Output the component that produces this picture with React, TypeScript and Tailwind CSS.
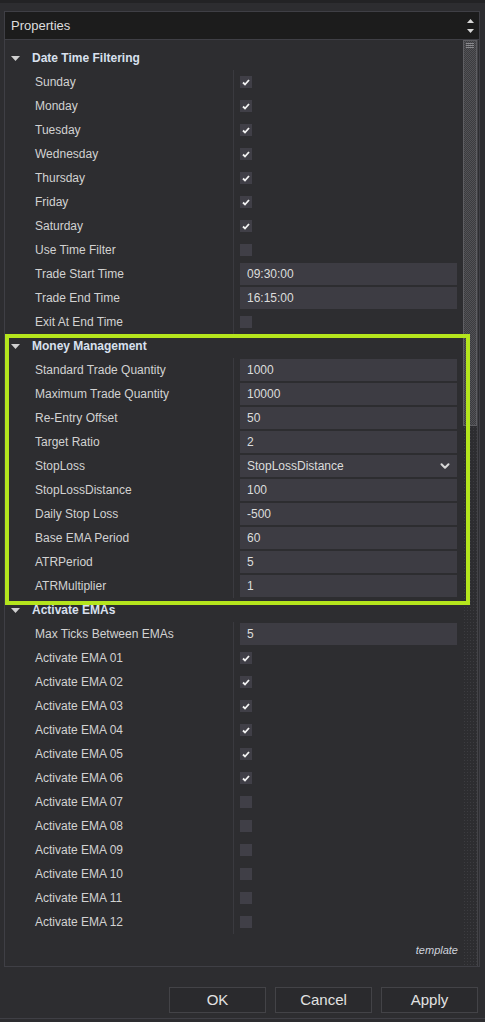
import { ChevronDown } from 'lucide-react'

type Row =
  | { kind: 'section'; label: string }
  | { kind: 'check'; label: string; on: boolean }
  | { kind: 'text'; label: string; value: string }
  | { kind: 'select'; label: string; value: string }

const rows: Row[] = [
  { kind: 'section', label: 'Date Time Filtering' },
  { kind: 'check', label: 'Sunday', on: true },
  { kind: 'check', label: 'Monday', on: true },
  { kind: 'check', label: 'Tuesday', on: true },
  { kind: 'check', label: 'Wednesday', on: true },
  { kind: 'check', label: 'Thursday', on: true },
  { kind: 'check', label: 'Friday', on: true },
  { kind: 'check', label: 'Saturday', on: true },
  { kind: 'check', label: 'Use Time Filter', on: false },
  { kind: 'text', label: 'Trade Start Time', value: '09:30:00' },
  { kind: 'text', label: 'Trade End Time', value: '16:15:00' },
  { kind: 'check', label: 'Exit At End Time', on: false },
  { kind: 'section', label: 'Money Management' },
  { kind: 'text', label: 'Standard Trade Quantity', value: '1000' },
  { kind: 'text', label: 'Maximum Trade Quantity', value: '10000' },
  { kind: 'text', label: 'Re-Entry Offset', value: '50' },
  { kind: 'text', label: 'Target Ratio', value: '2' },
  { kind: 'select', label: 'StopLoss', value: 'StopLossDistance' },
  { kind: 'text', label: 'StopLossDistance', value: '100' },
  { kind: 'text', label: 'Daily Stop Loss', value: '-500' },
  { kind: 'text', label: 'Base EMA Period', value: '60' },
  { kind: 'text', label: 'ATRPeriod', value: '5' },
  { kind: 'text', label: 'ATRMultiplier', value: '1' },
  { kind: 'section', label: 'Activate EMAs' },
  { kind: 'text', label: 'Max Ticks Between EMAs', value: '5' },
  { kind: 'check', label: 'Activate EMA 01', on: true },
  { kind: 'check', label: 'Activate EMA 02', on: true },
  { kind: 'check', label: 'Activate EMA 03', on: true },
  { kind: 'check', label: 'Activate EMA 04', on: true },
  { kind: 'check', label: 'Activate EMA 05', on: true },
  { kind: 'check', label: 'Activate EMA 06', on: true },
  { kind: 'check', label: 'Activate EMA 07', on: false },
  { kind: 'check', label: 'Activate EMA 08', on: false },
  { kind: 'check', label: 'Activate EMA 09', on: false },
  { kind: 'check', label: 'Activate EMA 10', on: false },
  { kind: 'check', label: 'Activate EMA 11', on: false },
  { kind: 'check', label: 'Activate EMA 12', on: false },
]

function Check({ on }: { on: boolean }) {
  return (
    <div className="w-[12px] h-[12px] bg-[#403f47] flex items-center justify-center">
      {on && (
        <svg width="8" height="7" viewBox="0 0 8 7">
          <path d="M1 3.5 L3 5.5 L7 1" stroke="#f2f2f2" strokeWidth="1.8" fill="none" />
        </svg>
      )}
    </div>
  )
}

function Field({ value, select }: { value: string; select?: boolean }) {
  return (
    <div className="w-[217px] h-[22px] bg-[#3d3c43] flex items-center justify-between pl-[7px] pr-[5px] text-[#dcdcdc]">
      <span>{value}</span>
      {select && <ChevronDown size={14} strokeWidth={3.5} className="text-[#d8d8d8]" />}
    </div>
  )
}

function PropRow({ row }: { row: Row }) {
  if (row.kind === 'section') {
    return (
      <div className="h-[24px] flex items-center pl-[6px]">
        <svg width="9" height="5" viewBox="0 0 9 5" className="mr-[12px]">
          <path d="M0 0 H9 L4.5 5 Z" fill="#d0d0d0" />
        </svg>
        <span className="font-bold text-[#d9e0ee]">{row.label}</span>
      </div>
    )
  }
  return (
    <div className="h-[24px] flex">
      <div className="w-[228px] flex items-center pl-[30px] text-[#d2d2d2]">{row.label}</div>
      <div className="flex-1 border-l border-[#3a3a3f] flex items-center pl-[6px]">
        {row.kind === 'check' && <Check on={row.on} />}
        {row.kind === 'text' && <Field value={row.value} />}
        {row.kind === 'select' && <Field value={row.value} select />}
      </div>
    </div>
  )
}

export default function App() {
  return (
    <div className="relative w-[485px] h-[1022px] overflow-hidden bg-[#2d2d30] text-[12px] font-['Liberation_Sans',Arial,sans-serif] text-[#d4d4d4]">
      <div className="h-[3px] bg-[#232325]" />

      <div className="ml-[4px] mt-[8px] w-[476px] h-[956px] border border-[#3f3f45] flex">
        <div className="flex-1 flex flex-col">
          <div className="h-[28px] bg-[#1c1c1c] border-b border-[#3f3f45] flex items-center pl-[6px] text-[13px] text-[#dedede]">
            Properties
          </div>
          <div className="pt-[6px] flex flex-col">
            {rows.map((row) => (
              <PropRow key={row.label} row={row} />
            ))}
          </div>
          <div className="flex justify-end pr-[5px] pt-[8px] text-[11px] italic text-[#cfd3dc]">template</div>
        </div>

        <div className="w-[16px] flex flex-col">
          <div className="h-[28px] bg-[#1c1c1c] border-b border-[#3f3f45] flex flex-col items-center justify-center gap-[6px] pr-[2px]">
            <svg width="7" height="4" viewBox="0 0 7 4">
              <path d="M0 4 H7 L3.5 0 Z" fill="#d8d8d8" />
            </svg>
            <svg width="7" height="4" viewBox="0 0 7 4">
              <path d="M0 0 H7 L3.5 4 Z" fill="#d8d8d8" />
            </svg>
          </div>
          <div className="flex flex-1">
            <div className="w-[14px] flex flex-col">
              <div className="h-[386px] border border-[#5e5e62] bg-[repeating-conic-gradient(#525256_0%_25%,#3c3c3f_0%_50%)] bg-[length:2px_2px] flex flex-col items-center pt-[2px] gap-[1px]">
                <div className="w-[8px] h-[1px] bg-[#8a8a8e]" />
                <div className="w-[8px] h-[1px] bg-[#8a8a8e]" />
                <div className="w-[8px] h-[1px] bg-[#8a8a8e]" />
              </div>
              <div className="flex-1 bg-[radial-gradient(#3c3c40_1px,transparent_1px)] bg-[length:3px_3px]" />
            </div>
            <div className="w-[1px] bg-[#434347]" />
          </div>
        </div>
      </div>

      <div className="mt-[20px] flex justify-end gap-[9px] pr-[7px]">
        {['OK', 'Cancel', 'Apply'].map((b) => (
          <button
            key={b}
            type="button"
            className="w-[97px] h-[26px] border border-[#434347] bg-[#2a2a2d] text-[15px] text-[#e2e2e2]"
          >
            {b}
          </button>
        ))}
      </div>
      <div className="mt-[5px] h-[1px] bg-[#3f3f45]" />

      <div className="absolute left-[5px] top-[334px] w-[465px] h-[271px] border-[4px] border-[#b4e51d] pointer-events-none" />
    </div>
  )
}
